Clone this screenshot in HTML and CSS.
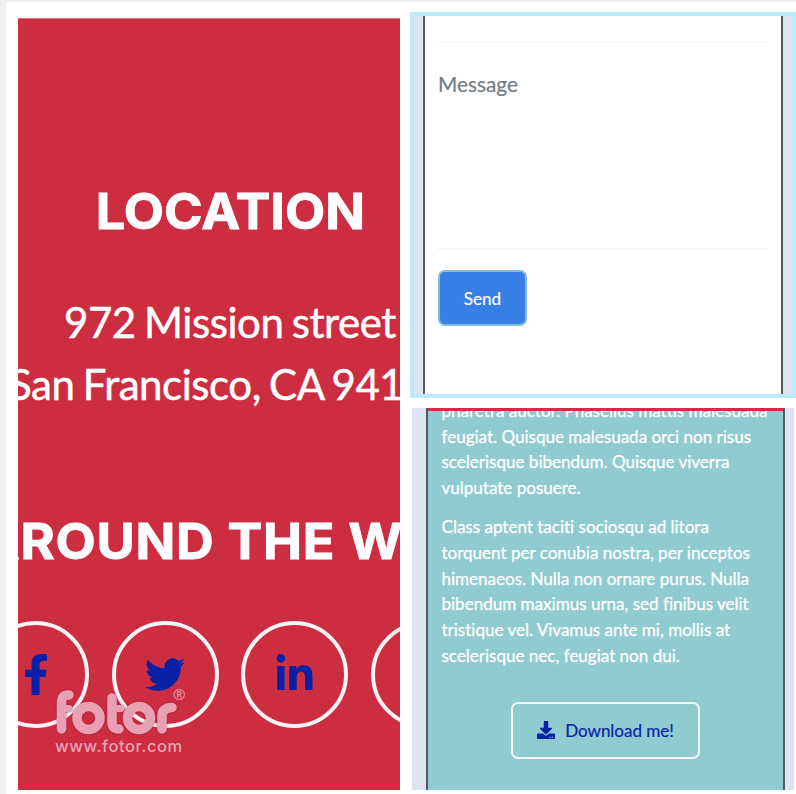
FILE: index.html
```html
<!DOCTYPE html>
<html lang="en">
<head>
<meta charset="utf-8">
<title>Layout collage</title>
<link rel="stylesheet" href="styles.css">
</head>
<body>
<main class="collage">
  <section class="footer-panel">
    <h2 class="title title-location">LOCATION</h2>
    <p class="address"><span class="street">972 Mission street</span><span class="city">San Francisco, CA 94103</span></p>
    <h2 class="title title-web">AROUND THE WEB</h2>
    <div class="socials">
      <a class="social"><svg class="ico-fb" viewBox="0 0 320 512"><path d="M279.14 288l14.22-92.66h-88.91v-60.13c0-25.35 12.42-50.06 52.24-50.06h40.42V6.26S260.43 0 225.36 0c-73.22 0-121.08 44.38-121.08 124.72v70.62H22.89V288h81.39v224h100.17V288z"/></svg></a>
      <a class="social"><svg class="ico-tw" viewBox="0 0 512 512"><path d="M459.37 151.716c.325 4.548.325 9.097.325 13.645 0 138.72-105.583 298.558-298.558 298.558-59.452 0-114.68-17.219-161.137-47.106 8.447.974 16.568 1.299 25.34 1.299 49.055 0 94.213-16.568 130.274-44.832-46.132-.975-84.792-31.188-98.112-72.772 6.498.974 12.995 1.624 19.818 1.624 9.421 0 18.843-1.3 27.614-3.573-48.081-9.747-84.143-51.98-84.143-102.985v-1.299c13.969 7.797 30.214 12.67 47.431 13.319-28.264-18.843-46.781-51.005-46.781-87.391 0-19.492 5.197-37.36 14.294-52.954 51.655 63.675 129.3 105.258 216.365 109.807-1.624-7.797-2.599-15.918-2.599-24.04 0-57.828 46.782-104.934 104.934-104.934 30.213 0 57.502 12.67 76.67 33.137 23.715-4.548 46.456-13.32 66.599-25.34-7.798 24.366-24.366 44.833-46.132 57.827 21.117-2.273 41.584-8.122 60.426-16.243-14.292 20.791-32.161 39.308-52.628 54.253z"/></svg></a>
      <a class="social"><svg class="ico-in" viewBox="0 0 448 512"><path d="M100.28 448H7.4V148.9h92.88zM53.79 108.1C24.09 108.1 0 83.5 0 53.8a53.79 53.79 0 0 1 107.58 0c0 29.7-24.1 54.3-53.79 54.3zM447.9 448h-92.68V302.4c0-34.7-.7-79.2-48.29-79.2-48.29 0-55.69 37.7-55.69 76.7V448h-92.78V148.9h89.08v40.8h1.3c12.4-23.5 42.69-48.3 87.88-48.3 94 0 111.28 61.9 111.28 142.3V448z"/></svg></a>
      <a class="social"></a>
    </div>
    <div class="watermark">
      <svg class="wm-logo" viewBox="0 0 132 50">
        <g fill="none" stroke-width="9.5" stroke-linecap="round" stroke-linejoin="round">
          <path d="M7.500 42V16Q7.500 7.500 15 8"/>
          <path stroke-width="7" d="M8 21.500H15M58 21.500H67"/>
          <circle cx="34.500" cy="31" r="11.500"/>
          <path d="M58 11V35Q58 42 65 42"/>
          <circle cx="85" cy="31" r="11.500"/>
          <path d="M108 42V29Q108 21 118 20.500"/>
        </g>
      </svg>
      <span class="wm-reg">®</span>
      <span class="wm-url">www.fotor.com</span>
    </div>
  </section>
  <div class="column">
    <section class="contact-panel">
      <form class="phone form-phone">
        <div class="field field-prev"></div>
        <label class="field field-message">Message</label>
        <button type="button" class="send">Send</button>
      </form>
    </section>
    <section class="about-panel">
      <div class="phone about-phone">
        <div class="copy">
          <p>pharetra auctor. Phasellus mattis malesuada<br>feugiat. Quisque malesuada orci non risus<br>scelerisque bibendum. Quisque viverra<br>vulputate posuere.</p>
          <p>Class aptent taciti sociosqu ad litora<br>torquent per conubia nostra, per inceptos<br>himenaeos. Nulla non ornare purus. Nulla<br>bibendum maximus urna, sed finibus velit<br>tristique vel. Vivamus ante mi, mollis at<br>scelerisque nec, feugiat non dui.</p>
        </div>
        <a class="download"><svg viewBox="0 0 512 512"><path d="M216 0h80c13.300 0 24 10.700 24 24v168h87.700c17.800 0 26.700 21.500 14.100 34.100L269.700 378.300c-7.500 7.500-19.800 7.500-27.300 0L90.100 226.100c-12.600-12.600-3.700-34.100 14.100-34.100H192V24c0-13.300 10.700-24 24-24zm296 376v112c0 13.300-10.700 24-24 24H24c-13.300 0-24-10.700-24-24V376c0-13.300 10.700-24 24-24h146.700l49 49c20.100 20.100 52.500 20.100 72.600 0l49-49H488c13.300 0 24 10.700 24 24zm-124 88c0-11-9-20-20-20s-20 9-20 20 9 20 20 20 20-9 20-20zm64 0c0-11-9-20-20-20s-20 9-20 20 9 20 20 20 20-9 20-20z"/></svg><span>Download me!</span></a>
        <div class="strip"></div>
      </div>
    </section>
  </div>
</main>
</body>
</html>
```
FILE: styles.css
```css
* { box-sizing: border-box; }
body {
  margin: 0;
  padding: 2px 0 0 6px;
  height: 794px;
  overflow: hidden;
  background: #eff0f2;
  font-family: Lato, sans-serif;
}
.collage {
  display: grid;
  grid-template-columns: 382px 386px;
  column-gap: 10px;
  height: 792px;
  padding: 10px 0 0 12px;
  background: #fff;
}
h2, p { margin: 0; font-weight: normal; }

.footer-panel {
  position: relative;
  display: flex;
  flex-direction: column;
  align-items: center;
  width: 382px;
  height: 772px;
  margin-top: 6px;
  padding-left: 42px;
  overflow: hidden;
  background: #cd2d41;
  border-top: 1px solid #dc7080;
  color: #fff;
  white-space: nowrap;
}
.title {
  font: 700 49px/60px Inter, sans-serif;
  transform: scaleX(1.065);
  -webkit-text-stroke: .9px #fff;
  flex: none;
}
.title-location { margin-top: 163px; }
.address {
  display: flex;
  flex-direction: column;
  align-items: center;
  margin-top: 50px;
  font-size: 42px;
  line-height: 61.500px;
  letter-spacing: -.45px;
  word-spacing: -2px;
  -webkit-text-stroke: .5px #fff;
}
.title-web { margin-top: 97px; padding-right: 7px; letter-spacing: .7px; }
.socials {
  display: flex;
  flex: none;
  gap: 22.500px;
  margin-top: 49px;
}
.social {
  display: flex;
  flex: none;
  align-items: center;
  justify-content: center;
  width: 107px;
  height: 107px;
  border: 4px solid #f8f3f4;
  border-radius: 50%;
}
.social svg { fill: #0720a5; }
.ico-fb { height: 41px; width: 26px; }
.ico-tw { height: 41px; width: 40px; }
.ico-in { height: 41px; width: 37px; }

.watermark {
  position: absolute;
  left: 36px;
  top: 668px;
  width: 134px;
  height: 70px;
  color: #e9a3b4;
}
.wm-logo {
  position: absolute;
  left: 0;
  top: 0;
  width: 132px;
  height: 50px;
  stroke: #e8a0b2;
  filter: drop-shadow(0 0 1px rgba(120, 20, 40, .5));
}
.wm-reg {
  position: absolute;
  left: 119px;
  top: -2px;
  font: 15px/18px "Open Sans", sans-serif;
}
.wm-url {
  position: absolute;
  left: 1px;
  top: 49px;
  font: 500 16.500px/20px Inter, sans-serif;
  letter-spacing: .55px;
}

.column { display: flex; flex-direction: column; gap: 10px; }
.contact-panel {
  height: 386px;
  padding: 0 9px;
  background: #dde4ed;
  border: 4px solid #bdeaff;
}
.phone { height: 100%; border: solid #555a61; border-width: 0 2px; }
.form-phone {
  padding: 0 13px;
  background: #fff;
}
.field { display: block; border-bottom: 1px solid #eff0f1; }
.field-prev { height: 26px; }
.field-message {
  height: 207px;
  padding-top: 29px;
  color: #737b83;
  font-size: 20.800px;
  line-height: 26px;
  -webkit-text-stroke: .2px #737b83;
}
.send {
  display: block;
  width: 89px;
  height: 56px;
  margin-top: 21px;
  padding: 1px 0 0;
  border: 2px solid #7cc0d2;
  border-radius: 7px;
  background: #377ee6;
  color: #fff;
  font: 17.100px/26px Lato, sans-serif;
  -webkit-text-stroke: .2px #fff;
}

.about-panel {
  width: 382px;
  height: 382px;
  margin-left: 2px;
  padding: 0 9px 0 14px;
  background: #dde4ef;
}
.about-phone {
  position: relative;
  display: flex;
  flex-direction: column;
  overflow: hidden;
  background: #8fcbd1;
}
.strip {
  position: absolute;
  inset: 0 0 auto;
  height: 3px;
  background: #cc3045;
}
.copy {
  margin: -10px 0 0 13.500px;
  color: #fff;
  font-size: 17.100px;
  line-height: 25.650px;
  letter-spacing: -.03px;
  white-space: nowrap;
  -webkit-text-stroke: .25px #fff;
}
.copy p + p { margin-top: 13.700px; }
.download {
  display: flex;
  align-items: center;
  justify-content: center;
  align-self: center;
  flex: none;
  gap: 10px;
  width: 189px;
  height: 57px;
  margin: 33.500px 0 0;
  border: 2px solid #eef8f8;
  border-radius: 7px;
  color: #0c24a6;
  font-size: 17.100px;
  letter-spacing: -.05px;
  -webkit-text-stroke: .2px #0c24a6;
}
.download svg { width: 18px; height: 18px; fill: #0720a5; }
```
